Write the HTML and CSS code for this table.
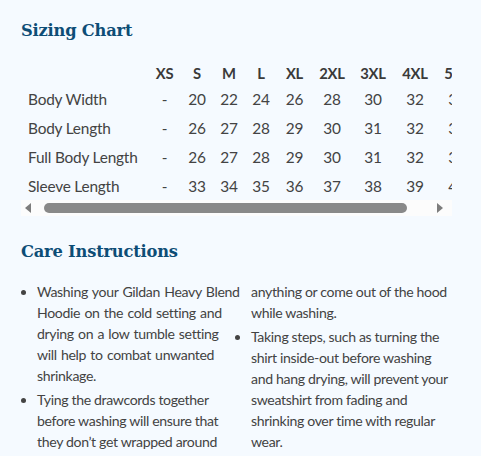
FILE: index.html
```html
<!DOCTYPE html>
<html>
<head>
<meta charset="utf-8">
<link rel="stylesheet" href="styles.css">
</head>
<body>
<div class="page">
  <h2 class="title">Sizing Chart</h2>
  <div class="scroller">
    <div class="viewport">
      <table class="chart">
        <colgroup>
          <col class="c-lbl"><col class="c-xs"><col class="c-s"><col class="c-m"><col class="c-l"><col class="c-xl"><col class="c-2xl"><col class="c-3xl"><col class="c-4xl"><col class="c-5xl">
        </colgroup>
        <thead>
          <tr><th class="lbl"></th><th>XS</th><th>S</th><th>M</th><th>L</th><th>XL</th><th>2XL</th><th>3XL</th><th>4XL</th><th>5XL</th></tr>
        </thead>
        <tbody>
          <tr><td class="lbl">Body Width</td><td>-</td><td>20</td><td>22</td><td>24</td><td>26</td><td>28</td><td>30</td><td>32</td><td>34</td></tr>
          <tr><td class="lbl">Body Length</td><td>-</td><td>26</td><td>27</td><td>28</td><td>29</td><td>30</td><td>31</td><td>32</td><td>33</td></tr>
          <tr><td class="lbl">Full Body Length</td><td>-</td><td>26</td><td>27</td><td>28</td><td>29</td><td>30</td><td>31</td><td>32</td><td>33</td></tr>
          <tr><td class="lbl">Sleeve Length</td><td>-</td><td>33</td><td>34</td><td>35</td><td>36</td><td>37</td><td>38</td><td>39</td><td>40</td></tr>
        </tbody>
      </table>
    </div>
    <div class="hbar">
      <span class="arrow left"></span>
      <div class="track"><div class="thumb"></div></div>
      <span class="arrow right"></span>
    </div>
  </div>
  <h2 class="title care">Care Instructions</h2>
  <ul class="care-list">
    <li class="spaced">Washing your Gildan Heavy Blend Hoodie on the cold setting and drying on a low tumble setting will help to combat unwanted shrinkage.</li>
    <li>Tying the drawcords together before washing will ensure that they don’t get wrapped around anything or come out of the hood while washing.</li>
    <li>Taking steps, such as turning the shirt inside-out before washing and hang drying, will prevent your sweatshirt from fading and shrinking over time with regular wear.</li>
  </ul>
</div>
</body>
</html>
```
FILE: styles.css
```css
html, body {
  margin: 0;
  padding: 0;
  background: #f5faff;
}
.page {
  padding: 19px 29px 0 21px;
  font-family: Lato, "Noto Sans", sans-serif;
  color: #434343;
  font-size: 14.1px;
  letter-spacing: -0.35px;
}
.title {
  margin: 0;
  font-family: "DejaVu Serif", serif;
  font-weight: bold;
  font-size: 16.3px;
  line-height: 24px;
  color: #0d4d76;
  letter-spacing: -0.2px;
}
.scroller {
  margin-top: 18px;
  width: 431px;
}
.viewport {
  overflow: hidden;
}
.chart {
  border-collapse: collapse;
  table-layout: fixed;
  width: 457px;
  white-space: nowrap;
  font-size: 15.4px;
  letter-spacing: -0.2px;
}
.c-lbl { width: 127px; }
.c-xs { width: 33px; }
.c-s { width: 32px; }
.c-m { width: 32px; }
.c-l { width: 32px; }
.c-xl { width: 35px; }
.c-2xl { width: 40px; }
.c-3xl { width: 42px; }
.c-4xl { width: 42px; }
.c-5xl { width: 42px; }
.chart th {
  height: 23px;
  padding: 0;
  font-weight: bold;
  text-align: center;
  color: #3a3a3a;
  font-size: 14.8px;
}
.chart td {
  height: 29px;
  padding: 0;
  text-align: center;
}
.chart th.lbl, .chart td.lbl {
  text-align: left;
  padding-left: 7px;
}
.hbar {
  display: flex;
  align-items: center;
  height: 16px;
  background: #fcfcfc;
}
.arrow {
  width: 0;
  height: 0;
  border-top: 5px solid transparent;
  border-bottom: 5px solid transparent;
}
.arrow.left {
  border-right: 6px solid #7d7d7d;
  margin: 0 5px 0 4px;
}
.arrow.right {
  border-left: 6px solid #7d7d7d;
  margin: 0 9px 0 0;
}
.track {
  flex: 1;
  padding-right: 30px;
}
.thumb {
  margin-left: 8px;
  height: 10px;
  border-radius: 5px;
  background: #898989;
}
.care {
  margin-top: 24px;
}
.care-list {
  margin: 17px 0 0;
  padding: 0 0 0 16px;
  column-count: 2;
  column-gap: 10px;
  line-height: 21px;
  width: 418px;
}
.care-list li {
  margin-bottom: 3px;
}
.care-list li.spaced {
  word-spacing: 1px;
}
```
